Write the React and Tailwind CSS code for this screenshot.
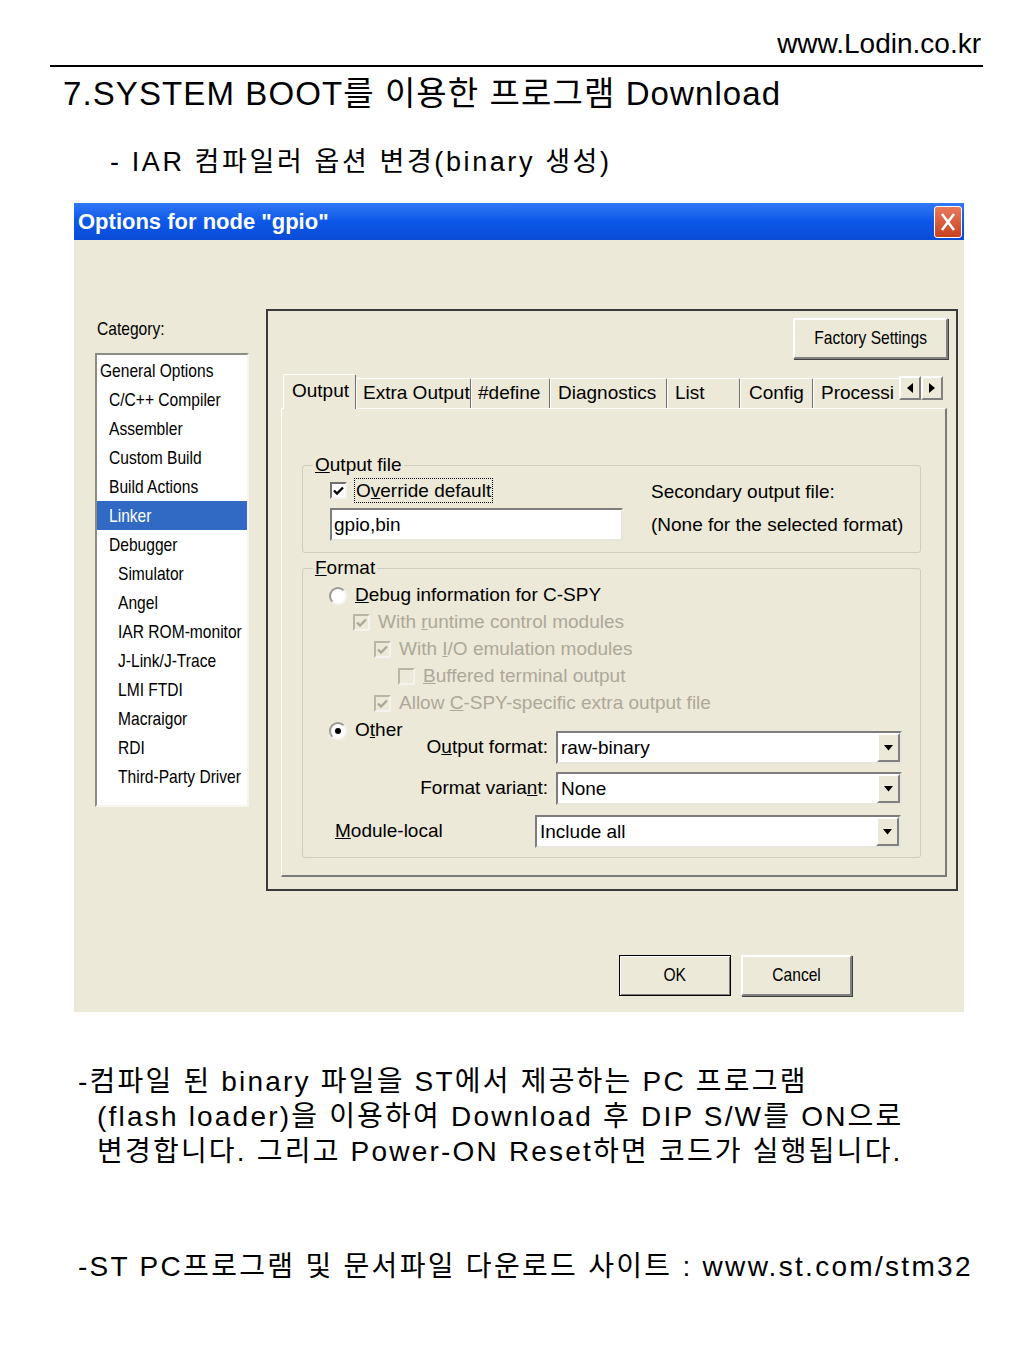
import React from 'react'

const SLIDE = "font-['Liberation_Sans','Noto_Sans_CJK_KR',sans-serif]"
const UI = "font-['Liberation_Sans','Noto_Sans_CJK_KR',sans-serif]"
// condensed look of the old dialog font: squeeze Liberation Sans horizontally
const SQUEEZE = 'inline-block scale-x-[0.82] whitespace-nowrap'

const CATEGORIES = [
  { label: 'General Options', level: 0 },
  { label: 'C/C++ Compiler', level: 1 },
  { label: 'Assembler', level: 1 },
  { label: 'Custom Build', level: 1 },
  { label: 'Build Actions', level: 1 },
  { label: 'Linker', level: 1, selected: true },
  { label: 'Debugger', level: 1 },
  { label: 'Simulator', level: 2 },
  { label: 'Angel', level: 2 },
  { label: 'IAR ROM-monitor', level: 2 },
  { label: 'J-Link/J-Trace', level: 2 },
  { label: 'LMI FTDI', level: 2 },
  { label: 'Macraigor', level: 2 },
  { label: 'RDI', level: 2 },
  { label: 'Third-Party Driver', level: 2 },
]

const INDENT = ['pl-[3px]', 'pl-[12px]', 'pl-[21px]']

const TABS = [
  { label: 'Output', w: 'w-[73px]', pl: 'pl-[8px]', selected: true },
  { label: 'Extra Output', w: 'w-[115px]', pl: 'pl-[6px]' },
  { label: '#define', w: 'w-[79px]', pl: 'pl-[6px]' },
  { label: 'Diagnostics', w: 'w-[117px]', pl: 'pl-[7px]' },
  { label: 'List', w: 'w-[73px]', pl: 'pl-[7px]' },
  { label: 'Config', w: 'w-[73px]', pl: 'pl-[8px]' },
]

function CheckBox({ checked, disabled }) {
  return (
    <span
      className={`w-[17px] h-[17px] shrink-0 flex items-center justify-center border-2 ${
        disabled
          ? 'border-t-[#b9b6a8] border-l-[#b9b6a8] border-b-[#f4f3ee] border-r-[#f4f3ee] bg-[#ECE9D8]'
          : 'border-t-[#6f6f6f] border-l-[#6f6f6f] border-b-[#f4f3ee] border-r-[#f4f3ee] bg-white'
      }`}
    >
      {checked && (
        <svg width="11" height="10" viewBox="0 0 11 10">
          <path d="M1 4.5 L4 7.5 L10 1.5" fill="none" stroke={disabled ? '#aca899' : '#000'} strokeWidth="2.4" />
        </svg>
      )}
    </span>
  )
}

function Radio({ checked }) {
  return (
    <span className="w-[18px] h-[18px] shrink-0 rounded-full bg-white border-2 border-t-[#9a9a92] border-l-[#9a9a92] border-b-[#f6f5f0] border-r-[#f6f5f0] flex items-center justify-center">
      {checked && <span className="w-[6px] h-[6px] rounded-full bg-black" />}
    </span>
  )
}

function Combo({ value, width }) {
  return (
    <div className={`${width} h-[33px] shrink-0 flex bg-white border-2 border-t-[#7d7d7d] border-l-[#7d7d7d] border-b-[#e8e6dc] border-r-[#e8e6dc]`}>
      <span className="flex-1 pl-[3px] text-[19px] leading-[29px] text-black">{value}</span>
      <span className="w-[23px] h-[29px] bg-[#ECE9D8] border-2 border-t-white border-l-white border-b-[#808080] border-r-[#808080] flex items-center justify-center">
        <svg width="9" height="6" viewBox="0 0 9 6">
          <polygon points="0,0 9,0 4.5,5.5" fill="#000" />
        </svg>
      </span>
    </div>
  )
}

function Row({ indent, children, disabled, width = '' }) {
  return (
    <div className={`h-[27px] flex items-center gap-[8px] ${indent} ${width} ${disabled ? 'text-[#aca899]' : 'text-black'}`}>
      {children}
    </div>
  )
}

export default function App() {
  return (
    <div className={`w-[1023px] h-[1364px] bg-white text-black ${SLIDE}`}>
      {/* Header */}
      <div className="pt-[28px] pr-[42px] text-right text-[28px] leading-[31px]">www.Lodin.co.kr</div>
      <div className="mt-[6px] ml-[50px] w-[933px] h-[2px] bg-black" />
      <h1 className="mt-[7px] ml-[63px] text-[33px] leading-[40px] tracking-[1.1px]">
        7.SYSTEM BOOT를 이용한 프로그램 Download
      </h1>
      <p className="mt-[32px] ml-[110px] text-[27px] leading-[32px] tracking-[2.6px]">
        - IAR 컴파일러 옵션 변경(binary 생성)
      </p>

      {/* Dialog screenshot */}
      <div className={`mt-[25px] ml-[74px] w-[890px] h-[809px] flex flex-col ${UI}`}>
        {/* Title bar */}
        <div className="h-[37px] flex items-center justify-between pl-[4px] pr-[2px] bg-linear-to-b from-[#2f78f5] via-[#0c57e8] to-[#0a4bd6]">
          <span className="text-white text-[22px] font-bold leading-[30px]">Options for node "gpio"</span>
          <span className="w-[28px] h-[32px] rounded-[3px] border border-white bg-linear-to-b from-[#e8795a] to-[#c73f1c] flex items-center justify-center">
            <svg width="16" height="20" viewBox="0 0 16 20">
              <path d="M2 2 L14 18 M14 2 L2 18" stroke="#fff" strokeWidth="2.6" />
            </svg>
          </span>
        </div>

        {/* Body */}
        <div className="flex-1 bg-[#ECE9D8] flex flex-col">
          <div className="flex items-start">
            {/* Category column */}
            <div className="mt-[77px] ml-[21px] w-[154px]">
              <div className="h-[24px] pl-[2px] text-[19px] leading-[24px]">
                <span className={`${SQUEEZE} origin-left`}>Category:</span>
              </div>
              <div className="mt-[12px] h-[454px] bg-white border-2 border-t-[#8c8c86] border-l-[#8c8c86] border-b-[#f6f5ef] border-r-[#f6f5ef] pt-[1px]">
                {CATEGORIES.map((c) => (
                  <div
                    key={c.label}
                    className={`h-[29px] ${INDENT[c.level]} text-[19px] leading-[29px] overflow-hidden ${
                      c.selected ? 'bg-[#316AC5] text-white' : 'text-black'
                    }`}
                  >
                    <span className={`${SQUEEZE} origin-left`}>{c.label}</span>
                  </div>
                ))}
              </div>
            </div>

            {/* Options frame */}
            <div className="mt-[69px] ml-[17px] w-[692px] h-[582px] border-2 border-[#3a3a3a] flex flex-col">
              <div className="mt-[7px] pr-[8px] flex justify-end">
                <button className="w-[155px] h-[41px] bg-[#ECE9D8] border-2 border-t-white border-l-white border-b-[#808080] border-r-[#808080] shadow-[1px_1px_0_#404040] text-[19px]">
                  <span className={SQUEEZE}>Factory Settings</span>
                </button>
              </div>

              {/* Tabs */}
              <div className="mt-[15px] ml-[15px] h-[35px] flex items-end relative z-10 -mb-[1px]">
                {TABS.map((t) => (
                  <div
                    key={t.label}
                    className={`${t.w} ${t.pl} ${
                      t.selected ? 'h-[35px] pt-[3px]' : 'h-[30px] mb-[1px] pt-[1px]'
                    } bg-[#ECE9D8] border-t border-l border-white border-r border-r-[#6e6e6e] rounded-t-[2px] text-[19px] leading-[26px] whitespace-nowrap overflow-hidden`}
                  >
                    {t.label}
                  </div>
                ))}
                <div className="w-[86px] h-[30px] mb-[1px] pl-[7px] pt-[1px] bg-[#ECE9D8] border-t border-l border-white text-[19px] leading-[26px] whitespace-nowrap">
                  Processi
                </div>
                <div className="self-start mt-[2px] flex">
                  {['M6 0 L0 5 L6 10 Z', 'M0 0 L6 5 L0 10 Z'].map((d) => (
                    <span key={d} className="w-[22px] h-[24px] bg-[#ECE9D8] border-2 border-t-white border-l-white border-b-[#808080] border-r-[#808080] flex items-center justify-center">
                      <svg width="6" height="10" viewBox="0 0 6 10">
                        <path d={d} fill="#000" />
                      </svg>
                    </span>
                  ))}
                </div>
              </div>

              {/* Tab panel */}
              <div className="ml-[13px] w-[666px] h-[469px] border-t border-l border-white border-r-2 border-b-2 border-r-[#7a7a7a] border-b-[#7a7a7a] text-[19px]">
                {/* Output file */}
                <fieldset className="mt-[44px] ml-[20px] w-[619px] h-[100px] border border-[#cfcdbf] rounded-[3px]">
                  <legend className="ml-[10px] px-[2px] leading-[24px]">
                    <u>O</u>utput file
                  </legend>
                  <div className="flex">
                    <div className="ml-[27px] w-[293px]">
                      <div className="h-[27px] flex items-center gap-[7px]">
                        <CheckBox checked />
                        <span className="border border-dotted border-black px-[1px] leading-[23px]">
                          O<u>v</u>erride default
                        </span>
                      </div>
                      <div className="mt-[4px] h-[33px] bg-white border-2 border-t-[#7d7d7d] border-l-[#7d7d7d] border-b-[#e8e6dc] border-r-[#e8e6dc] pl-[2px] leading-[29px]">
                        gpio,bin
                      </div>
                    </div>
                    <div className="ml-[28px] -mt-[2px] leading-[33px]">
                      <div>Secondary output file:</div>
                      <div>(None for the selected format)</div>
                    </div>
                  </div>
                </fieldset>

                {/* Format */}
                <fieldset className="mt-[3px] ml-[20px] w-[619px] h-[302px] border border-[#cfcdbf] rounded-[3px]">
                  <legend className="ml-[10px] px-[2px] leading-[24px]">
                    <u>F</u>ormat
                  </legend>
                  <div className="mt-[2px]">
                    <Row indent="pl-[26px]">
                      <Radio />
                      <span>
                        <u>D</u>ebug information for C-SPY
                      </span>
                    </Row>
                    <Row indent="pl-[50px]" disabled>
                      <CheckBox checked disabled />
                      <span>
                        With <u>r</u>untime control modules
                      </span>
                    </Row>
                    <Row indent="pl-[71px]" disabled>
                      <CheckBox checked disabled />
                      <span>
                        With <u>I</u>/O emulation modules
                      </span>
                    </Row>
                    <Row indent="pl-[95px]" disabled>
                      <CheckBox disabled />
                      <span>
                        <u>B</u>uffered terminal output
                      </span>
                    </Row>
                    <Row indent="pl-[71px]" disabled>
                      <CheckBox checked disabled />
                      <span>
                        Allow <u>C</u>-SPY-specific extra output file
                      </span>
                    </Row>
                    <div className="flex items-start">
                      <Row indent="pl-[26px]" width="w-[116px] shrink-0">
                        <Radio checked />
                        <span>
                          O<u>t</u>her
                        </span>
                      </Row>
                      <div className="mt-[14px] flex flex-col gap-[8px]">
                        <div className="flex items-center">
                          <span className="w-[129px] text-right">
                            O<u>u</u>tput format:
                          </span>
                          <span className="ml-[8px]">
                            <Combo value="raw-binary" width="w-[346px]" />
                          </span>
                        </div>
                        <div className="flex items-center">
                          <span className="w-[129px] text-right">
                            Format varia<u>n</u>t:
                          </span>
                          <span className="ml-[8px]">
                            <Combo value="None" width="w-[346px]" />
                          </span>
                        </div>
                      </div>
                    </div>
                    <div className="mt-[10px] flex items-center">
                      <span className="ml-[32px] w-[200px] shrink-0">
                        <u>M</u>odule-local
                      </span>
                      <Combo value="Include all" width="w-[366px]" />
                    </div>
                  </div>
                </fieldset>
              </div>
            </div>
          </div>

          {/* Buttons */}
          <div className="mt-[64px] pr-[112px] flex justify-end gap-[10px]">
            <button className="w-[112px] h-[41px] border border-black bg-[#ECE9D8] shadow-[inset_1px_1px_0_#fff,inset_-1px_-1px_0_#808080] text-[19px]">
              <span className={SQUEEZE}>OK</span>
            </button>
            <button className="w-[111px] h-[41px] bg-[#ECE9D8] border-2 border-t-white border-l-white border-b-[#808080] border-r-[#808080] shadow-[1px_1px_0_#404040] text-[19px]">
              <span className={SQUEEZE}>Cancel</span>
            </button>
          </div>
        </div>
      </div>

      {/* Notes */}
      <div className="mt-[52px] text-[28px] leading-[35px] tracking-[2.2px]">
        <p className="ml-[78px]">-컴파일 된 binary 파일을 ST에서 제공하는 PC 프로그램</p>
        <p className="ml-[97px]">(flash loader)을 이용하여 Download 후 DIP S/W를 ON으로</p>
        <p className="ml-[97px]">변경합니다. 그리고 Power-ON Reset하면 코드가 실행됩니다.</p>
      </div>
      <p className="mt-[80px] ml-[78px] text-[28px] leading-[35px] tracking-[2.3px]">
        -ST PC프로그램 및 문서파일 다운로드 사이트 : www.st.com/stm32
      </p>
    </div>
  )
}
